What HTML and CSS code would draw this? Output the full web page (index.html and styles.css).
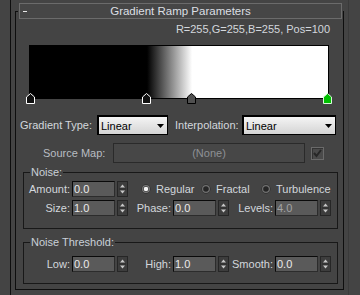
FILE: index.html
```html
<!DOCTYPE html>
<html>
<head>
<meta charset="utf-8">
<link rel="stylesheet" href="styles.css">
</head>
<body>
<div class="outer">
  <div class="rollout">
    <div class="rhead">
      <span class="dash"></span>
      <span class="title">Gradient Ramp Parameters</span>
      <span></span>
    </div>
    <div class="info">R=255,G=255,B=255, Pos=100</div>
    <div class="ramp-wrap">
      <div class="ramp"></div>
      <svg class="flag f1" width="9" height="11" viewBox="0 0 9 11"><polygon points="0.5,4 4.5,0.5 8.5,4 8.5,10.5 0.5,10.5" fill="#111" stroke="#fff"/></svg>
      <svg class="flag f2" width="9" height="11" viewBox="0 0 9 11"><polygon points="0.5,4 4.5,0.5 8.5,4 8.5,10.5 0.5,10.5" fill="#111" stroke="#fff"/></svg>
      <svg class="flag f3" width="9" height="11" viewBox="0 0 9 11"><polygon points="0.5,4 4.5,0.5 8.5,4 8.5,10.5 0.5,10.5" fill="#505050" stroke="#000"/></svg>
      <svg class="flag f4" width="9" height="11" viewBox="0 0 9 11"><polygon points="0.5,4 4.5,0.5 8.5,4 8.5,10.5 0.5,10.5" fill="#00c000" stroke="#d8f8d8"/></svg>
    </div>
    <div class="row row1">
      <span class="lbl gt">Gradient Type:</span>
      <div class="dd dd1"><span>Linear</span><svg width="7" height="4" viewBox="0 0 7 4"><polygon points="0,0 7,0 3.5,4" fill="#000"/></svg></div>
      <span class="lbl ip">Interpolation:</span>
      <div class="dd dd2"><span>Linear</span><svg width="7" height="4" viewBox="0 0 7 4"><polygon points="0,0 7,0 3.5,4" fill="#000"/></svg></div>
    </div>
    <div class="row row2">
      <span class="lbl sm">Source Map:</span>
      <div class="mapbtn">(None)</div>
      <div class="chk"><svg width="11" height="11" viewBox="0 0 11 11"><polyline points="2,5 4.5,8 9,2" fill="none" stroke="#262626" stroke-width="2"/></svg></div>
    </div>
    <div class="group g1">
      <div class="legend">Noise:</div>
      <div class="grow ga">
        <span class="cl c1">Amount:</span><div class="fld">0.0</div><div class="spin"><svg width="9" height="14" viewBox="0 0 9 14"><polygon points="4.5,2.5 7,5.5 2,5.5" fill="#c8c8c8"/><line x1="1" y1="7" x2="8" y2="7" stroke="#2a2a2a"/><polygon points="2,8.5 7,8.5 4.5,11.5" fill="#c8c8c8"/></svg></div>
        <div class="radios">
          <span class="rad"><svg width="10" height="10" viewBox="0 0 10 10"><circle cx="5" cy="5" r="4.5" fill="#262626"/><circle cx="5" cy="5" r="3.4" fill="none" stroke="#7a7a7a" stroke-width="1.2"/><circle cx="5" cy="5" r="2.3" fill="#f4f4f4"/></svg>Regular</span>
          <span class="rad"><svg width="10" height="10" viewBox="0 0 10 10"><circle cx="5" cy="5" r="4.5" fill="#262626"/><circle cx="5" cy="5" r="3.4" fill="none" stroke="#707070" stroke-width="1.2"/></svg>Fractal</span>
          <span class="rad"><svg width="10" height="10" viewBox="0 0 10 10"><circle cx="5" cy="5" r="4.5" fill="#262626"/><circle cx="5" cy="5" r="3.4" fill="none" stroke="#707070" stroke-width="1.2"/></svg>Turbulence</span>
        </div>
      </div>
      <div class="grow gb">
        <span class="cl c1">Size:</span><div class="fld">1.0</div><div class="spin"><svg width="9" height="14" viewBox="0 0 9 14"><polygon points="4.5,2.5 7,5.5 2,5.5" fill="#c8c8c8"/><line x1="1" y1="7" x2="8" y2="7" stroke="#2a2a2a"/><polygon points="2,8.5 7,8.5 4.5,11.5" fill="#c8c8c8"/></svg></div>
        <span class="cl c2">Phase:</span><div class="fld">0.0</div><div class="spin"><svg width="9" height="14" viewBox="0 0 9 14"><polygon points="4.5,2.5 7,5.5 2,5.5" fill="#c8c8c8"/><line x1="1" y1="7" x2="8" y2="7" stroke="#2a2a2a"/><polygon points="2,8.5 7,8.5 4.5,11.5" fill="#c8c8c8"/></svg></div>
        <span class="cl c3">Levels:</span><div class="fld dis">4.0</div><div class="spin"><svg width="9" height="14" viewBox="0 0 9 14"><polygon points="4.5,2.5 7,5.5 2,5.5" fill="#c8c8c8"/><line x1="1" y1="7" x2="8" y2="7" stroke="#2a2a2a"/><polygon points="2,8.5 7,8.5 4.5,11.5" fill="#c8c8c8"/></svg></div>
      </div>
    </div>
    <div class="group g2">
      <div class="legend">Noise Threshold:</div>
      <div class="grow gc">
        <span class="cl c1">Low:</span><div class="fld">0.0</div><div class="spin"><svg width="9" height="14" viewBox="0 0 9 14"><polygon points="4.5,2.5 7,5.5 2,5.5" fill="#c8c8c8"/><line x1="1" y1="7" x2="8" y2="7" stroke="#2a2a2a"/><polygon points="2,8.5 7,8.5 4.5,11.5" fill="#c8c8c8"/></svg></div>
        <span class="cl c2">High:</span><div class="fld">1.0</div><div class="spin"><svg width="9" height="14" viewBox="0 0 9 14"><polygon points="4.5,2.5 7,5.5 2,5.5" fill="#c8c8c8"/><line x1="1" y1="7" x2="8" y2="7" stroke="#2a2a2a"/><polygon points="2,8.5 7,8.5 4.5,11.5" fill="#c8c8c8"/></svg></div>
        <span class="cl c3">Smooth:</span><div class="fld">0.0</div><div class="spin"><svg width="9" height="14" viewBox="0 0 9 14"><polygon points="4.5,2.5 7,5.5 2,5.5" fill="#c8c8c8"/><line x1="1" y1="7" x2="8" y2="7" stroke="#2a2a2a"/><polygon points="2,8.5 7,8.5 4.5,11.5" fill="#c8c8c8"/></svg></div>
      </div>
    </div>
  </div>
</div>
</body>
</html>
```
FILE: styles.css
```css
* { box-sizing: border-box; }
html, body { margin: 0; padding: 0; }
body {
  background: #444444;
  width: 360px;
  height: 295px;
  overflow: hidden;
  font-family: "Liberation Sans", Arial, sans-serif;
  font-size: 11px;
  color: #d3d7dc;
}
.outer {
  margin-left: 10px;
  width: 339px;
  height: 295px;
  border-left: 1px solid #0e0e0e;
  border-right: 1px solid #3a3a3a;
  padding-top: 11px;
}
.rollout {
  margin: 0 4px;
  height: 279px;
  border: 1px solid #0e0e0e;
  display: flex;
  flex-direction: column;
}
.rhead {
  margin: -9px 1px 0 3px;
  height: 16px;
  border: 1px solid #6b6b6b;
  background: #464646;
  box-shadow: 0 0 0 1px #444444;
  display: grid;
  grid-template-columns: 1fr auto 1fr;
}
.dash {
  width: 4px;
  height: 1px;
  background: #e8e8e8;
  margin: 7px 0 0 3px;
}
.title {
  line-height: 14px;
  font-size: 11.5px;
  color: #dcdfe3;
}
.info {
  margin-top: 4px;
  line-height: 13px;
  text-align: right;
  padding-right: 13px;
}
.ramp-wrap {
  position: relative;
  margin: 9px 0 0 13px;
  width: 300px;
  height: 54px;
}
.ramp {
  width: 300px;
  height: 54px;
  border: 1px solid #000;
  background: linear-gradient(to right, #000 0%, #000 39.3%, #fff 54.4%, #fff 100%);
}
.flag { position: absolute; top: 48px; display: block; }
.f1 { left: -3px; }
.f2 { left: 113px; }
.f3 { left: 158px; }
.f4 { left: 294px; }
.row {
  display: flex;
  align-items: center;
  height: 20px;
}
.row1 { margin-top: 16px; padding-left: 4px; }
.row2 { margin-top: 8px; padding-left: 27px; }
.lbl { white-space: nowrap; }
.gt { width: 77px; }
.ip { width: 67px; margin-left: 7px; }
.sm { width: 70px; color: #b9bdc2; }
.dd {
  height: 20px;
  border: 1px solid #000;
  box-shadow: inset 1px 1px 0 #000;
  background: linear-gradient(#f6f6f6, #d4d4d4);
  color: #000;
  display: flex;
  align-items: center;
  justify-content: space-between;
  padding: 1px 3px 0 3px;
}
.dd svg { display: block; }
.dd1 { width: 71px; }
.dd2 { width: 94px; }
.mapbtn {
  width: 192px;
  height: 20px;
  border: 1px solid #2a2a2a;
  background: #474747;
  color: #8e9195;
  text-align: center;
  line-height: 18px;
}
.chk {
  margin-left: 6px;
  width: 13px;
  height: 13px;
  border: 1px solid #6a6a6a;
  background: #4a4a4a;
  box-shadow: inset 1px 1px 0 #333;
}
.chk svg { display: block; }
.group {
  margin: 0 5px 0 7px;
  border: 1px solid #181818;
}
.g1 { margin-top: 9px; padding-bottom: 12px; }
.g2 { margin-top: 13px; padding-bottom: 11px; }
.legend {
  margin: -7px 0 0 6px;
  padding: 0 1px;
  width: fit-content;
  line-height: 13px;
  background: #444444;
  color: #c9d0d8;
}
.grow {
  display: flex;
  align-items: center;
  height: 16px;
}
.ga { margin-top: 2px; }
.gb { margin-top: 3px; }
.gc { margin-top: 7px; }
.cl {
  text-align: right;
  margin-right: 2px;
  line-height: 16px;
  white-space: nowrap;
}
.c1 { width: 46px; }
.c2 { width: 43px; }
.c3 { width: 44px; }
.fld {
  width: 43px;
  height: 16px;
  border: 1px solid #2c2c2c;
  border-top-color: #0a0a0a;
  border-left-color: #0a0a0a;
  background: #5a5a5a;
  color: #eaeaea;
  padding-left: 1px;
  line-height: 14px;
}
.fld.dis { color: #a4a4a4; }
.spin {
  margin-left: 2px;
  width: 11px;
  height: 16px;
  border: 1px solid #262626;
  background: #3d3d3d;
}
.spin svg { display: block; }
.radios {
  display: flex;
  margin-left: 13px;
}
.rad {
  width: 60px;
  display: flex;
  align-items: center;
  white-space: nowrap;
}
.rad svg { margin-right: 5px; flex: none; }
```
